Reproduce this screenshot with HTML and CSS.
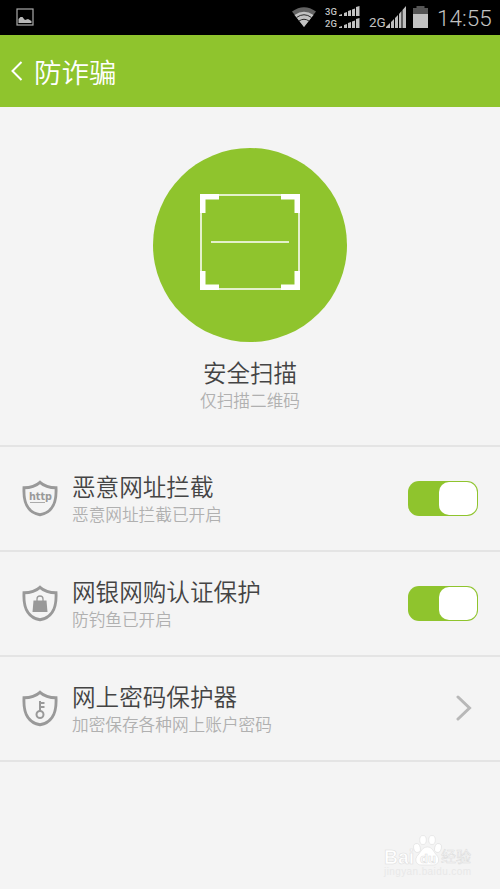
FILE: index.html
```html
<!DOCTYPE html>
<html lang="zh-CN">
<head>
<meta charset="utf-8">
<title>防诈骗</title>
<link rel="stylesheet" href="styles.css">
</head>
<body>
<div class="screen">
  <div class="status">
    <svg class="picture" width="18" height="18" viewBox="0 0 18 18"><rect x="1" y="1" width="16" height="16" fill="none" stroke="#aaa" stroke-width="1.2"/><path d="M2.500 15v-4l2-2 2 0 1.500 2 1 1 3-1 3.500 2v2z" fill="#b8b8b8"/></svg>
    <div class="status-right">
      <svg class="wifi" width="26" height="20" viewBox="0 0 26 20"><path d="M1 4.500Q13-4 25 4.500L13 20z" fill="#626262"/><path d="M3.500 8Q13 1.500 22.500 8L13 20z" fill="#c2c2c2"/><path d="M5.500 10.500Q13 5 20.500 10.500M8 14Q13 10.500 18 14" fill="none" stroke="#292929" stroke-width="1"/></svg>
      <div class="dual">
        <div class="sim"><span>3G</span><svg width="21" height="10" viewBox="0 0 21 10"><path d="M0 10v-1l3-1v2zM5 10V7l3-1v4zM9 10V5l3-1v6zM13 10V3.500l3-1V10zM17 10V1l3.500-1V10z" fill="#c2c2c2"/></svg></div>
        <div class="sim"><span>2G</span><svg width="21" height="10" viewBox="0 0 21 10"><path d="M0 10v-1l3-1v2zM5 10V7l3-1v4zM9 10V5l3-1v6zM13 10V3.500l3-1V10zM17 10V1l3.500-1V10z" fill="#c2c2c2"/></svg></div>
      </div>
      <span class="net">2G</span>
      <svg class="signal" width="20" height="22" viewBox="0 0 20 22"><path d="M0 22v-1l4-4v5zM5 22v-6l3-3v9zM9 22V12l3-3v13zM13 22V8l2.500-3v17zM16.500 22V4L20 0v22z" fill="#bdbdbd"/></svg>
      <svg class="battery" width="15" height="22" viewBox="0 0 15 22"><path d="M3.500 0h8v2H15v6H0V2h3.500z" fill="#555"/><path d="M0 8h15v14H0z" fill="#c2c2c2"/></svg>
      <span class="clock">14:55</span>
    </div>
  </div>

  <header class="header">
    <svg class="back" width="12" height="20" viewBox="0 0 12 20"><path d="M10.500 1L1.500 10l9 9" fill="none" stroke="#fff" stroke-width="2"/></svg>
    <h1>防诈骗</h1>
  </header>

  <section class="scan">
    <div class="circle">
      <svg class="frame" width="100" height="96" viewBox="0 0 100 96"><rect x="1" y="1" width="98" height="94" fill="none" stroke="#fff" stroke-width="1.500"/><path d="M0 0H19V5.500H5.500V19H0zM100 0V19H94.500V5.500H81V0zM0 96V77H5.500V90.500H19V96zM100 96H81V90.500H94.500V77H100z" fill="#fff"/><path d="M11 48H89" stroke="#fff" stroke-width="1.600"/></svg>
    </div>
    <h2>安全扫描</h2>
    <p>仅扫描二维码</p>
  </section>

  <main class="list">
    <div class="row">
      <svg class="shield" width="36" height="37" viewBox="0 0 36 37"><path d="M18 2.300Q12 7.700 2 7.700C1.500 18 2.500 32 18 34.800C33.500 32 34.500 18 34 7.700Q24 7.700 18 2.300z" fill="none" stroke="#999" stroke-width="2.900"/><text class="http" x="18.500" y="20" text-anchor="middle" textLength="23" lengthAdjust="spacingAndGlyphs">http</text><path d="M8 22.500h15" stroke="#aaa" stroke-width="1"/></svg>
      <div class="copy"><h3>恶意网址拦截</h3><p>恶意网址拦截已开启</p></div>
      <div class="toggle"><div class="knob"></div></div>
    </div>
    <div class="row">
      <svg class="shield" width="36" height="37" viewBox="0 0 36 37"><path d="M18 2.300Q12 7.700 2 7.700C1.500 18 2.500 32 18 34.800C33.500 32 34.500 18 34 7.700Q24 7.700 18 2.300z" fill="none" stroke="#999" stroke-width="2.900"/><path d="M11.500 15.500h13l1 11.500h-15z" fill="#999"/><path d="M15 17v-3q0-3 3-3t3 3v3" fill="none" stroke="#999" stroke-width="1.300"/></svg>
      <div class="copy"><h3>网银网购认证保护</h3><p>防钓鱼已开启</p></div>
      <div class="toggle"><div class="knob"></div></div>
    </div>
    <div class="row">
      <svg class="shield" width="36" height="37" viewBox="0 0 36 37"><path d="M18 2.300Q12 7.700 2 7.700C1.500 18 2.500 32 18 34.800C33.500 32 34.500 18 34 7.700Q24 7.700 18 2.300z" fill="none" stroke="#999" stroke-width="2.900"/><circle cx="18" cy="24.500" r="3.500" fill="none" stroke="#999" stroke-width="2"/><path d="M18 21.500V11M18 13h4.500M18 17h4.500" fill="none" stroke="#999" stroke-width="2"/></svg>
      <div class="copy"><h3>网上密码保护器</h3><p>加密保存各种网上账户密码</p></div>
      <svg class="chevron" width="16" height="26" viewBox="0 0 16 26"><path d="M2 2L13.500 13L2 24" fill="none" stroke="#b8b8b8" stroke-width="3" stroke-linecap="round"/></svg>
    </div>
  </main>

  <svg class="watermark" width="94" height="46" viewBox="0 0 94 46">
    <g fill="#fff" stroke="#dedede" stroke-width=".6">
      <ellipse cx="37" cy="14" rx="3.300" ry="4.500" transform="rotate(-15 37 14)"/>
      <ellipse cx="43" cy="6" rx="3.300" ry="4.500"/>
      <ellipse cx="52" cy="6" rx="3.300" ry="4.500"/>
      <ellipse cx="58" cy="14" rx="3.300" ry="4.500" transform="rotate(15 58 14)"/>
      <path d="M47.500 13c5 0 6 5 9 8 4 4 2 10-3 10H41c-5 0-7-6-3-10 3-3 4-8 9.500-8z"/>
      <text class="wm-latin" x="4" y="29.500" textLength="30" lengthAdjust="spacingAndGlyphs">Bai</text>
      <text class="wm-du" x="40" y="29">du</text>
      <text class="wm-cjk" x="61" y="28" textLength="30">经验</text>
    </g>
    <text class="wm-url" x="4" y="40.500" textLength="87">jingyan.baidu.com</text>
  </svg>
</div>
</body>
</html>
```
FILE: styles.css
```css
* { box-sizing: border-box; margin: 0; padding: 0; }
body { font-family: "Noto Sans CJK SC", sans-serif; font-weight: 350; background: #f4f4f4; }
h1, h2, h3 { font-weight: 350; }
svg { display: block; flex: none; }
.screen { position: relative; width: 500px; height: 889px; overflow: hidden; background: #f4f4f4; }
.status { height: 35px; background: #000; display: flex; justify-content: space-between; padding: 0 8px 0 16px; font-family: Roboto, sans-serif; font-weight: 400; color: #c2c2c2; }
.picture { margin-top: 8px; }
.status-right { display: flex; align-items: flex-start; }
.wifi { margin-top: 7px; }
.dual { margin: 6px 0 0 8px; display: flex; flex-direction: column; gap: 2px; }
.sim { display: flex; gap: 2px; height: 10px; align-items: flex-end; }
.sim span { width: 12px; font-size: 9.5px; line-height: 9px; font-weight: 500; }
.net { margin: 14px 0 0 9px; width: 17px; font-size: 13.5px; line-height: 17px; }
.signal { margin-top: 6px; }
.battery { margin: 6px 0 0 7px; }
.clock { margin: 4px 0 0 9px; width: 55px; font-size: 22.5px; line-height: 28px; font-weight: 300; white-space: nowrap; }
.header { height: 72px; background: #8fc42d; display: flex; align-items: center; padding-left: 11px; color: #fff; }
.header h1 { margin: -1px 0 0 11px; font-size: 27.5px; line-height: 36px; }
.scan { height: 340px; padding-top: 41px; border-bottom: 2px solid #e4e4e4; display: flex; flex-direction: column; align-items: center; }
.circle { width: 194px; height: 194px; flex: none; border-radius: 50%; background: #8fc42d; display: flex; justify-content: center; padding-top: 46px; }
.scan h2 { margin-top: 15px; font-size: 23.5px; line-height: 30px; color: #444; }
.scan p { font-size: 16.67px; line-height: 26px; color: #b0b0b0; }
.row { height: 105px; border-bottom: 2px solid #e4e4e4; display: flex; align-items: center; padding: 0 22px; }
.copy { flex: 1; margin-left: 14px; }
.copy h3 { font-size: 23.6px; line-height: 30px; color: #444; }
.copy p { font-size: 16.67px; line-height: 26px; color: #b0b0b0; }
.http { font: 700 10px "DejaVu Sans", sans-serif; fill: #999; }
.toggle { width: 70px; height: 35px; border-radius: 11px; background: #8fc42d; padding: 1px; display: flex; justify-content: flex-end; }
.knob { width: 38px; height: 33px; border-radius: 10px; background: #fff; }
.chevron { margin: -2px 6px 0 0; }
.watermark { position: absolute; left: 380px; top: 834px; }
.wm-latin { font: 700 20px "Liberation Sans", sans-serif; }
.wm-du { font: 700 13px "Liberation Sans", sans-serif; }
.wm-cjk { font: 400 15px "Noto Sans CJK SC", sans-serif; }
.wm-url { font: 10px "Liberation Sans", sans-serif; fill: #e8e8e8; }
```
